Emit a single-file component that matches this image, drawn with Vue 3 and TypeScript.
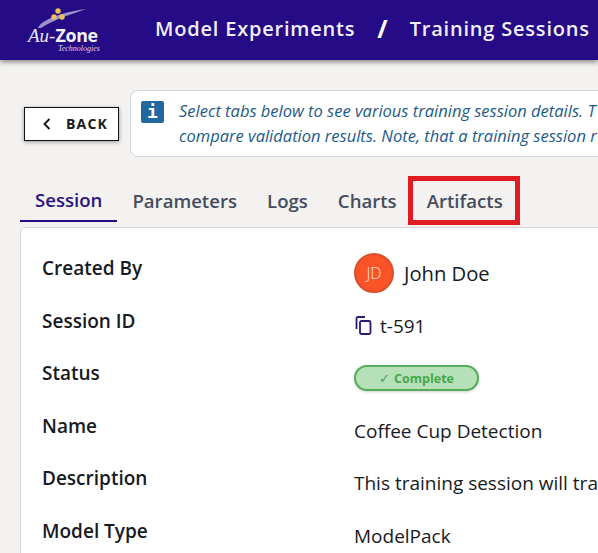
<script setup lang="ts">
const rows: { label: string; value?: string; kind: string }[] = [
  { label: 'Created By', kind: 'user' },
  { label: 'Session ID', kind: 'id' },
  { label: 'Status', kind: 'status' },
  { label: 'Name', value: 'Coffee Cup Detection', kind: 'text' },
  { label: 'Description', value: 'This training session will train', kind: 'text' },
  { label: 'Model Type', value: 'ModelPack', kind: 'text' },
]
const tabs = ['Session', 'Parameters', 'Logs', 'Charts', 'Artifacts']
</script>

<template>
  <div class="page">
    <header class="bar">
      <div class="logo">
        <svg width="76" height="52" viewBox="0 0 76 52">
          <path d="M12 24 C14 18 30 9 60 5 C50 9 30 14 15 24 Z" fill="#b9b4dc" opacity=".8" />
          <circle cx="32" cy="7" r="2.7" fill="#eec25a" />
          <circle cx="28" cy="13" r="2.7" fill="#eec25a" />
          <circle cx="36" cy="13" r="2.7" fill="#eec25a" />
        </svg>
        <span class="au">Au-<b>Zone</b></span>
        <span class="tech">Technologies</span>
      </div>
      <span class="crumb">Model Experiments</span>
      <span class="slash">/</span>
      <span class="crumb">Training Sessions</span>
    </header>

    <section class="top">
      <button class="back">
        <svg class="chev" width="8" height="12" viewBox="0 0 8 12" fill="none" stroke="#1a1a1a" stroke-width="2">
          <path d="M6.5 1 L1.5 6 L6.5 11" />
        </svg>
        BACK
      </button>
      <div class="info">
        <span class="badge">i</span>
        <p>Select tabs below to see various training session details. T<br />compare validation results. Note, that a training session r</p>
      </div>
    </section>

    <nav class="tabs">
      <div
        v-for="(t, i) in tabs"
        :key="t"
        class="tab"
        :class="{ active: i === 0, marked: t === 'Artifacts' }"
      >{{ t }}</div>
    </nav>

    <main class="card">
      <div v-for="r in rows" :key="r.label" class="row">
        <div class="label">{{ r.label }}</div>
        <div class="value">
          <template v-if="r.kind === 'user'">
            <span class="avatar">JD</span><span class="user">John Doe</span>
          </template>
          <template v-else-if="r.kind === 'id'">
            <svg class="copy" width="17" height="19" viewBox="0 0 17 19" fill="none" stroke="#2a1a78" stroke-width="1.8">
              <path d="M1.5 13 V2.5 Q1.5 1 3 1 H10" />
              <rect x="5" y="5" width="10.5" height="13" rx="1.5" />
            </svg>
            <span>t-591</span>
          </template>
          <span v-else-if="r.kind === 'status'" class="pill"><i class="tick">✓</i>Complete</span>
          <span v-else>{{ r.value }}</span>
        </div>
      </div>
    </main>
  </div>
</template>

<style>
html, body { margin: 0; overflow: hidden; background: #f3f2f1; }
</style>

<style scoped>
.page {
  width: 598px;
  height: 553px;
  overflow: hidden;
  background: #f3f2f1;
  font-family: "Open Sans", "Noto Sans", sans-serif;
}
.bar {
  height: 60px;
  background: #250b85;
  box-shadow: 0 2px 5px rgba(0, 0, 0, .45);
  display: flex;
  align-items: center;
  color: #f1effa;
  white-space: nowrap;
  position: relative;
}
.logo {
  width: 76px;
  height: 52px;
  margin-left: 26px;
  margin-right: 53px;
  position: relative;
  flex: none;
}
.logo svg { position: absolute; left: 0; top: 0; }
.au {
  position: absolute;
  left: 2px;
  top: 24px;
  font: italic 19px/15px "Liberation Serif", serif;
  color: #e8e6f6;
}
.au b { font: bold 17.8px/15px "Open Sans", sans-serif; color: #f4f3fb; letter-spacing: -.3px; }
.tech {
  position: absolute;
  left: 32px;
  top: 41px;
  font: italic 8px/8px "Liberation Serif", serif;
  color: #d8d5ee;
}
.crumb { font-size: 20px; font-weight: 600; letter-spacing: .8px; margin-bottom: 4px; }
.slash { font-size: 25px; font-weight: 700; margin: 0 22px 4px; color: #fff; }

.top {
  display: flex;
  align-items: center;
  padding: 30px 0 0 24px;
}
.back {
  width: 95px;
  height: 34px;
  flex: none;
  background: #fff;
  border: 1px solid #111;
  box-shadow: 0 1px 4px rgba(0, 0, 0, .4);
  font: 700 14px "Open Sans", sans-serif;
  letter-spacing: 1.2px;
  color: #1a1a1a;
  padding: 0 0 0 18px;
  display: flex;
  align-items: center;
  box-sizing: border-box;
}
.chev { margin-right: 15px; flex: none; }
.info {
  margin-left: 11px;
  height: 67px;
  width: 520px;
  flex: none;
  box-sizing: border-box;
  background: #fff;
  border: 1px solid #ced9e4;
  border-radius: 8px;
  display: flex;
  padding: 10px 0 0 10px;
}
.badge {
  width: 23px;
  height: 22px;
  border-radius: 2px;
  background: #20689f;
  color: #fff;
  font: 700 18px/22px "DejaVu Sans Mono", monospace;
  text-align: center;
  flex: none;
}
.info p {
  margin: -3px 0 0 15px;
  font-size: 16.5px;
  font-style: italic;
  line-height: 25px;
  color: #1d5a88;
  white-space: nowrap;
}
.tabs {
  display: flex;
  margin: 27px 0 5px 20px;
  height: 38px;
  align-items: stretch;
}
.tab {
  box-sizing: border-box;
  height: 38px;
  padding: 4px 15px 0;
  font-size: 18.6px;
  font-weight: 600;
  color: #454c5c;
  white-space: nowrap;
  line-height: 26px;
  position: relative;
}
.tab.active {
  color: #2a1280;
  border-bottom: 2px solid #250b85;
  padding-top: 3px;
}
.tab.marked::after {
  content: "";
  position: absolute;
  left: -4px;
  top: -8px;
  width: 112px;
  height: 49px;
  box-sizing: border-box;
  border: 5px solid #e01b22;
}
.card {
  margin: 0 0 0 20px;
  width: 620px;
  height: 400px;
  box-sizing: border-box;
  background: #fff;
  border: 1px solid #d8d6d4;
  border-radius: 5px 0 0 0;
  padding: 20px 0 0 21px;
}
.row {
  display: flex;
  height: 52.5px;
  color: #171a22;
}
.label { width: 312px; flex: none; font-size: 19px; font-weight: 600; line-height: 41px; }
.value {
  font-size: 19px;
  display: flex;
  align-items: center;
  height: 52px;
  white-space: nowrap;
  margin-top: -1px;
  align-self: flex-start;
}
.avatar {
  width: 40px;
  height: 40px;
  box-sizing: border-box;
  border: 2px solid #d9502c;
  border-radius: 50%;
  background: #fa5327;
  color: #fde3da;
  font-size: 16px;
  font-weight: 300;
  display: flex;
  align-items: center;
  justify-content: center;
  margin-right: 10px;
}
.user { font-size: 20.2px; }
.copy { margin-right: 8px; margin-left: 1px; }
.pill {
  width: 125px;
  height: 26px;
  box-sizing: border-box;
  border: 2px solid #52ac58;
  border-radius: 13px;
  background: #b5e0b8;
  color: #45a84c;
  font-size: 12.5px;
  font-weight: 700;
  display: flex;
  align-items: center;
  justify-content: center;
  box-shadow: 0 1px 3px rgba(0, 0, 0, .2);
}
.tick { font-style: normal; font-weight: 400; color: #4b9b55; margin-right: 4px; }
</style>
